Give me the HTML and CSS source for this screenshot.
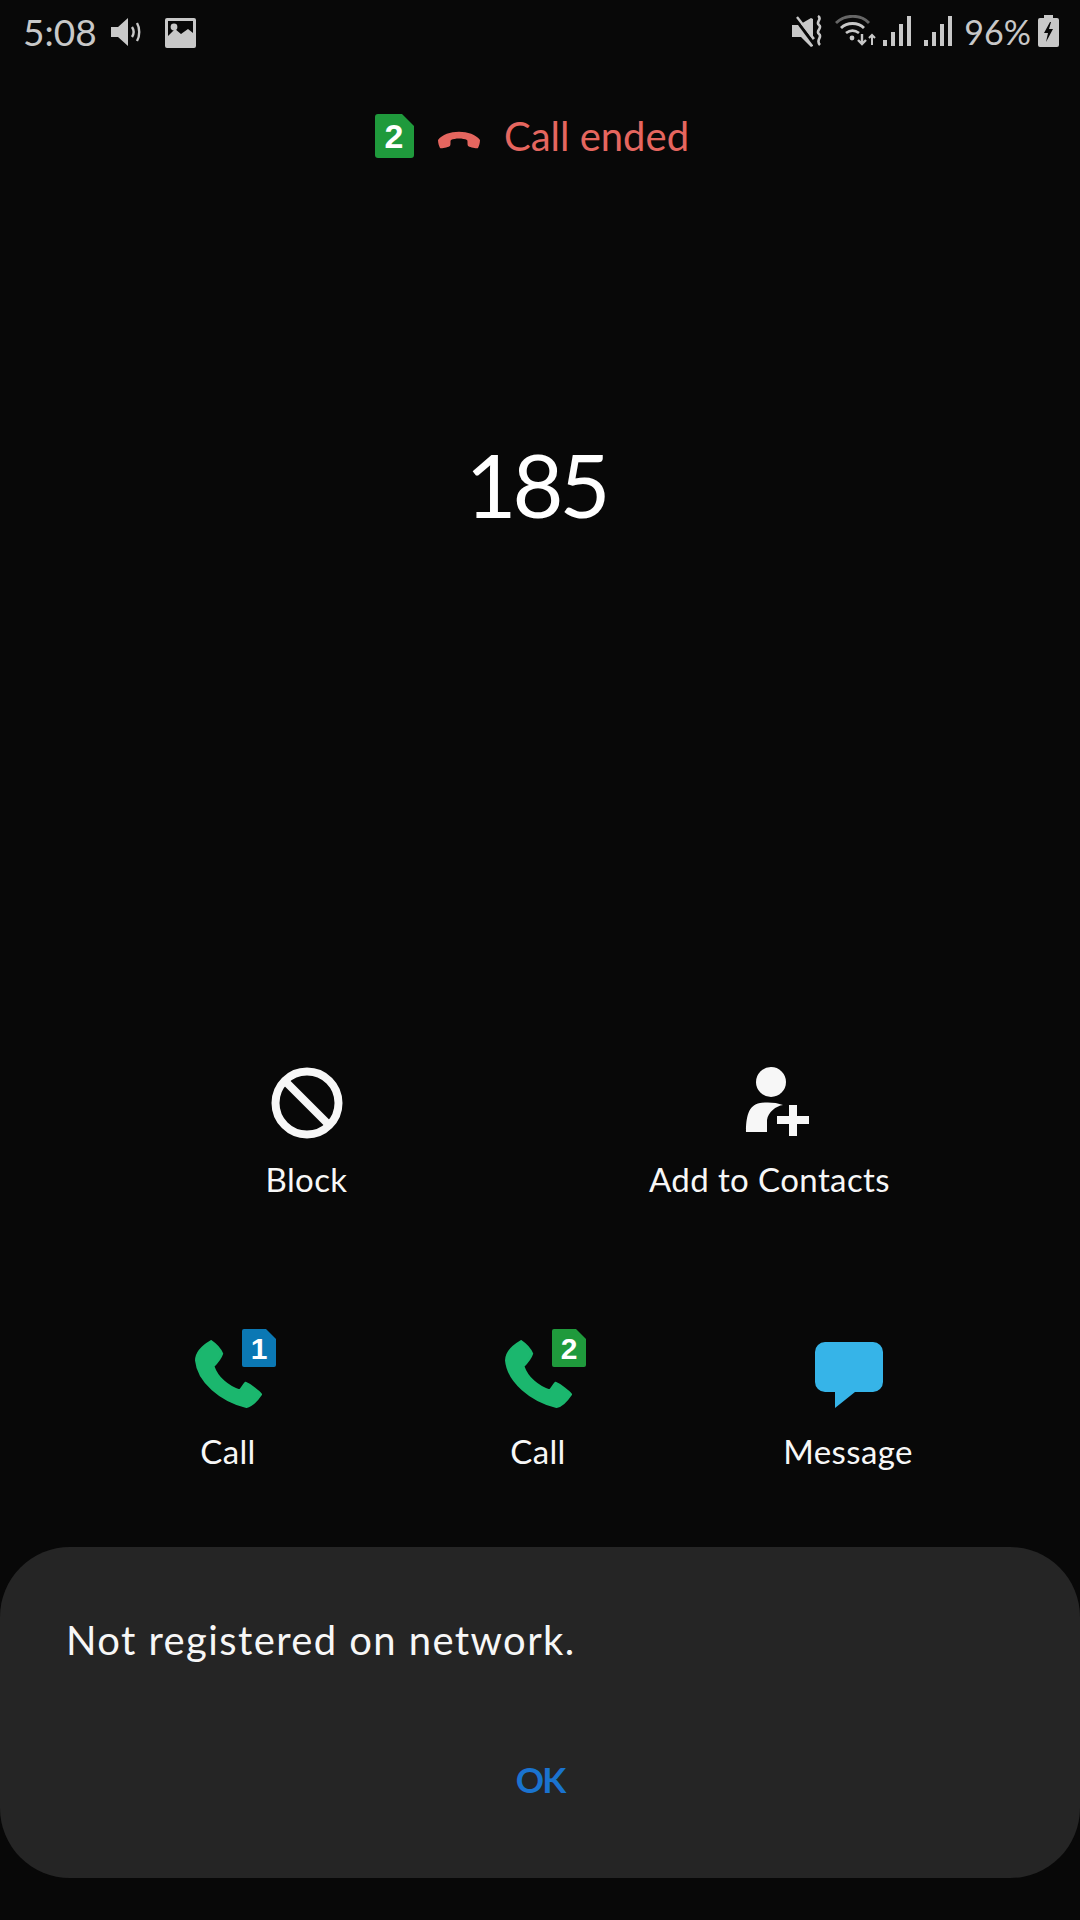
FILE: index.html
```html
<!DOCTYPE html>
<html lang="en">
<head>
    <meta charset="UTF-8">
    <meta name="viewport" content="width=device-width, initial-scale=1.0">
    <title>Call ended</title>
    <link rel="stylesheet" href="styles.css">
</head>
<body>
    <div class="status-bar">
        <div class="status-left">
            <span class="time">5:08</span>
            <svg class="ico" width="32" height="28" viewBox="0 0 32 28" fill="#c8c8c8">
                <path d="M0 9h7L17 0v28L7 19H0z"/>
                <path d="M21 9c2 3 2 7 0 10M26 5c3 5 3 13 0 18" fill="none" stroke="#c8c8c8" stroke-width="2.4"/>
            </svg>
            <svg class="ico ico-image" width="31" height="30" viewBox="0 0 31 30">
                <path fill="#c8c8c8" fill-rule="evenodd" d="M2 0h27a2 2 0 0 1 2 2v26a2 2 0 0 1-2 2H2a2 2 0 0 1-2-2V2a2 2 0 0 1 2-2zM3 3v15l7-7 6 5 7-5 5 4V3z"/>
                <circle cx="9" cy="9" r="3.4" fill="#c8c8c8"/>
            </svg>
        </div>
        <div class="status-right">
            <svg class="ico" width="33" height="33" viewBox="0 0 33 33">
                <path fill="#c8c8c8" d="M0 10h7l12-7 2 1v27l-2 1L9 22H0z"/>
                <path d="M2 2l20 27" stroke="#080808" stroke-width="3"/>
                <path d="M5 2l17 22" stroke="#c8c8c8" stroke-width="2.4"/>
                <path d="M26 1c5 3-3 6 1 9s-4 6 0 9-4 6 1 11" fill="none" stroke="#c8c8c8" stroke-width="2.6"/>
            </svg>
            <svg class="ico ico-wifi" width="42" height="31" viewBox="0 0 42 31" fill="none">
                <path d="M2 8c9-9 25-9 33 0" stroke="#666" stroke-width="2.8"/>
                <path d="M7 13c6-6 17-6 23 0" stroke="#c8c8c8" stroke-width="2.8"/>
                <path d="M12 18c4-3 9-3 13 0" stroke="#c8c8c8" stroke-width="2.8"/>
                <circle cx="18" cy="23" r="2.4" fill="#c8c8c8"/>
                <path d="M28 19v9M24 25l4 4 4-4" stroke="#c8c8c8" stroke-width="2.4"/>
                <path d="M38 30v-10M35 23l3-3 3 3" stroke="#c8c8c8" stroke-width="2"/>
            </svg>
            <svg class="ico ico-signal" width="29" height="30" viewBox="0 0 29 30" fill="#c8c8c8">
                <rect x="0" y="24" width="4" height="6"/><rect x="8" y="16" width="4" height="14"/><rect x="16" y="8" width="4" height="22"/><rect x="24" y="0" width="4" height="30"/>
            </svg>
            <svg class="ico ico-signal" width="29" height="30" viewBox="0 0 29 30" fill="#c8c8c8">
                <rect x="0" y="24" width="4" height="6"/><rect x="8" y="16" width="4" height="14"/><rect x="16" y="8" width="4" height="22"/><rect x="24" y="0" width="4" height="30"/>
            </svg>
            <span class="battery-text">96%</span>
            <svg class="ico" width="21" height="32" viewBox="0 0 21 32">
                <path fill="#c8c8c8" d="M6 0h9v3h4a2 2 0 0 1 2 2v25a2 2 0 0 1-2 2H2a2 2 0 0 1-2-2V5a2 2 0 0 1 2-2h4z"/>
                <path fill="#080808" d="M12 7L6 18h4l-2 9 7-13h-4l2-7z"/>
            </svg>
        </div>
    </div>

    <div class="call-state">
        <svg width="39" height="44" viewBox="0 0 39 44">
            <path fill="#1f9a3c" d="M3 0h24l12 12v29a3 3 0 0 1-3 3H3a3 3 0 0 1-3-3V3a3 3 0 0 1 3-3z"/>
            <text x="19" y="34" class="sim-digit sim-digit-big">2</text>
        </svg>
        <svg class="hangup" width="42" height="18" viewBox="0 0 42 18">
            <path fill="#e5665f" d="M0 9C8-2 34-2 42 9c0 3-1 6-2 8-1 1-9-1-10-2-1-2 0-5-1-6-4-2-12-2-16 0-1 1 0 4-1 6-1 1-9 3-10 2C1 15 0 12 0 9z"/>
        </svg>
        <span class="call-ended">Call ended</span>
    </div>

    <div class="number">185</div>

    <div class="actions-top">
        <div class="action">
            <svg width="80" height="72" viewBox="0 0 80 72" fill="none">
                <circle cx="40" cy="36" r="31.5" stroke="#f7f7f7" stroke-width="8"/>
                <path d="M18 14l44 44" stroke="#f7f7f7" stroke-width="8"/>
            </svg>
            <span class="label">Block</span>
        </div>
        <div class="action">
            <svg width="80" height="72" viewBox="0 0 80 72" fill="#f7f7f7">
                <circle cx="41" cy="15" r="15"/>
                <path d="M16 65c0-14 2-27 14-29 6-1 16-1 23 2-7 1-15 7-16 15v12z"/>
                <path d="M59 38h8v11h12v8H67v12h-8V57H47v-8h12z"/>
            </svg>
            <span class="label">Add to Contacts</span>
        </div>
    </div>

    <div class="actions-bottom">
        <div class="action">
            <div class="call-icon">
                <svg class="handset" width="68" height="68" viewBox="-1 -1 70 70">
                    <path class="handset-shape" d="M15.6 0C7 5 0 12 0 20 2 42 26 62 52 68c6-1 11-7 15-13-2-3-11-10-16-12-2 2-4 6-6 8-12-4-23-13-27-25 3-3 7-7 9-13-2-5-7-10-11.400-13z"/>
                </svg>
                <svg class="sim-badge" width="34" height="38" viewBox="0 0 34 38">
                    <path fill="#0b78b4" d="M2 0h22l10 10v26a2 2 0 0 1-2 2H2a2 2 0 0 1-2-2V2a2 2 0 0 1 2-2z"/>
                    <text x="17" y="30" class="sim-digit">1</text>
                </svg>
            </div>
            <span class="label">Call</span>
        </div>
        <div class="action">
            <div class="call-icon">
                <svg class="handset" width="68" height="68" viewBox="-1 -1 70 70">
                    <path class="handset-shape" d="M15.6 0C7 5 0 12 0 20 2 42 26 62 52 68c6-1 11-7 15-13-2-3-11-10-16-12-2 2-4 6-6 8-12-4-23-13-27-25 3-3 7-7 9-13-2-5-7-10-11.400-13z"/>
                </svg>
                <svg class="sim-badge" width="34" height="38" viewBox="0 0 34 38">
                    <path fill="#1f9a3c" d="M2 0h22l10 10v26a2 2 0 0 1-2 2H2a2 2 0 0 1-2-2V2a2 2 0 0 1 2-2z"/>
                    <text x="17" y="30" class="sim-digit">2</text>
                </svg>
            </div>
            <span class="label">Call</span>
        </div>
        <div class="action">
            <div class="call-icon">
                <svg class="bubble" width="68" height="66" viewBox="0 0 68 66">
                    <path fill="#36b4e8" d="M10 0h48a10 10 0 0 1 10 10v30a10 10 0 0 1-10 10H40L20 66V50H10A10 10 0 0 1 0 40V10A10 10 0 0 1 10 0z"/>
                </svg>
            </div>
            <span class="label">Message</span>
        </div>
    </div>

    <div class="dialog">
        <p class="dialog-text">Not registered on network.</p>
        <div class="dialog-ok">OK</div>
    </div>
</body>
</html>
```

FILE: styles.css
```css
* {
    box-sizing: border-box;
}

body {
    font-family: Lato, "Open Sans", sans-serif;
    background-color: #080808;
    color: #f7f7f7;
    margin: 0;
    padding: 0;
    width: 1080px;
    height: 1920px;
    overflow: hidden;
    display: flex;
    flex-direction: column;
}

svg {
    display: block;
}

.status-bar {
    height: 60px;
    display: flex;
    justify-content: space-between;
    align-items: flex-start;
    padding: 15px 21px 0 23px;
    color: #c8c8c8;
}

.status-left,
.status-right {
    display: flex;
    align-items: flex-start;
}

.time {
    font-size: 37px;
    line-height: 34px;
    width: 88px;
}

.ico {
    flex: none;
}

.status-left .ico {
    margin-top: 3px;
}

.ico-image {
    margin-left: 22px;
}

.ico-wifi {
    margin-left: 9px;
}

.ico-signal {
    margin-left: 7px;
    margin-top: 1px;
}

.ico-signal + .ico-signal {
    margin-left: 12px;
}

.battery-text {
    font-size: 34px;
    line-height: 34px;
    margin: 0 7px 0 11px;
}

.call-state {
    margin-top: 54px;
    height: 44px;
    display: flex;
    align-items: center;
    justify-content: center;
    padding-right: 16px;
}

.hangup {
    margin: 8px 24px 0 24px;
}

.call-ended {
    font-size: 40px;
    line-height: 44px;
    color: #e5665f;
}

.sim-digit {
    font-family: "Liberation Sans", sans-serif;
    font-weight: bold;
    font-size: 30px;
    fill: #ffffff;
    text-anchor: middle;
}

.sim-digit-big {
    font-size: 34px;
}

.handset-shape {
    fill: #1bb76e;
    stroke: #1bb76e;
    stroke-width: 2;
    stroke-linejoin: round;
}

.number {
    margin-top: 276px;
    height: 100px;
    padding-right: 8px;
    font-size: 88px;
    line-height: 100px;
    letter-spacing: -4px;
    text-align: center;
    color: #ffffff;
}

.actions-top {
    margin-top: 533px;
    padding: 0 75px;
    display: grid;
    grid-template-columns: 463px 463px;
}

.actions-top .label {
    margin-top: 18px;
}

.actions-bottom {
    margin-top: 128px;
    padding: 0 73px;
    display: grid;
    grid-template-columns: 310px 310px 310px;
}

.action {
    display: flex;
    flex-direction: column;
    align-items: center;
}

.label {
    font-size: 33px;
    line-height: 44px;
    letter-spacing: 0.4px;
    margin-top: 21px;
}

.call-icon {
    position: relative;
    width: 81px;
    height: 79px;
}

.handset {
    position: absolute;
    left: 7px;
    top: 11px;
}

.sim-badge {
    position: absolute;
    left: 54px;
    top: 0;
}

.bubble {
    position: absolute;
    left: 7px;
    top: 13px;
}

.dialog {
    margin-top: auto;
    margin-bottom: 42px;
    height: 331px;
    background-color: #252525;
    border-radius: 70px;
    padding: 0 66px;
}

.dialog-text {
    margin: 68px 0 0 0;
    font-size: 40px;
    line-height: 50px;
    letter-spacing: 1.4px;
}

.dialog-ok {
    margin-top: 89px;
    text-align: center;
    color: #1a73cf;
    font-size: 35px;
    line-height: 50px;
    font-weight: bold;
    letter-spacing: -2px;
}
```
